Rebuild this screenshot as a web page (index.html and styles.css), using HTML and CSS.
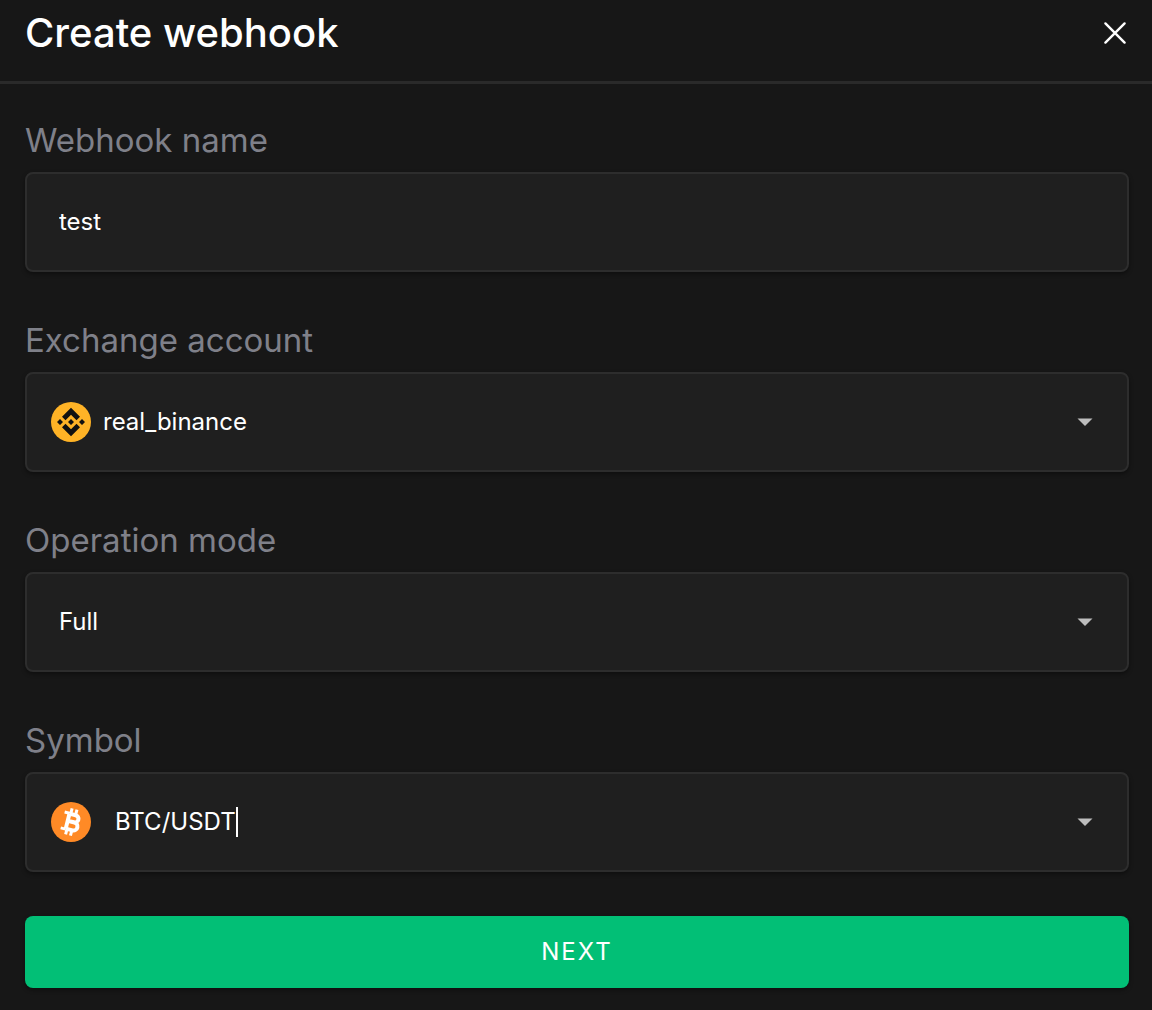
FILE: index.html
```html
<!DOCTYPE html>
<html lang="en">
<head>
<meta charset="utf-8">
<meta name="viewport" content="width=device-width, initial-scale=1">
<title>Create webhook</title>
<link rel="stylesheet" href="styles.css">
</head>
<body>
<header class="header">
  <h1 class="title">Create webhook</h1>
  <button class="close" type="button" aria-label="Close">
    <svg width="24" height="24" viewBox="0 0 24 24" fill="none" stroke="currentColor" stroke-width="2.4" stroke-linecap="round" aria-hidden="true"><path d="M2.4 2.4l19.2 19.2M21.6 2.4L2.4 21.6"/></svg>
  </button>
</header>
<form class="form">
  <div class="fields">
    <div class="field">
      <label class="label" for="name">Webhook name</label>
      <div class="control control-plain">
        <input class="value grow" id="name" type="text" value="test">
      </div>
    </div>
    <div class="field">
      <label class="label" for="account">Exchange account</label>
      <div class="control">
        <svg class="coin" viewBox="0 0 40 40" aria-hidden="true">
          <circle cx="20" cy="20" r="20" fill="#ffb326"/>
          <g fill="#111">
            <path d="M20 5.800l9 9-3.500 3.500-5.500-5.500-5.500 5.500-3.500-3.500z"/>
            <path d="M20 34.200l9-9-3.500-3.500-5.500 5.500-5.500-5.500-3.500 3.500z"/>
            <path d="M9 17l3 3-3 3-3-3zM31 17l3 3-3 3-3-3zM20 17l3 3-3 3-3-3z"/>
          </g>
        </svg>
        <select class="value grow" id="account"><option>real_binance</option></select>
        <svg class="arrow" viewBox="0 0 24 24" aria-hidden="true"><path d="M7 9.700l5 5 5-5z"/></svg>
      </div>
    </div>
    <div class="field">
      <label class="label" for="mode">Operation mode</label>
      <div class="control control-plain">
        <select class="value grow" id="mode"><option>Full</option></select>
        <svg class="arrow" viewBox="0 0 24 24" aria-hidden="true"><path d="M7 9.700l5 5 5-5z"/></svg>
      </div>
    </div>
    <div class="field">
      <label class="label" for="symbol">Symbol</label>
      <div class="control control-search">
        <svg class="coin" viewBox="0 0 40 40" aria-hidden="true">
          <circle cx="20" cy="20" r="20" fill="#ff8a26"/>
          <g transform="rotate(14 20 20)" fill="none" stroke="#fff">
            <path stroke-width="4" d="M16.500 12.300h6.400a3.600 3.600 0 0 1 0 7.300h-6M16.500 19.700h7a3.950 3.950 0 0 1 0 8h-7M16.500 12.300v15.400"/>
            <path stroke-width="3" d="M11.400 11.800h5M11.400 28.200h5M17.800 6.600v5M22.800 6.600v5M17.800 28.400v5M22.800 28.400v5"/>
          </g>
        </svg>
        <div class="search grow">
          <input class="value fit" id="symbol" type="text" value="BTC/USDT">
          <span class="caret"></span>
        </div>
        <svg class="arrow" viewBox="0 0 24 24" aria-hidden="true"><path d="M7 9.700l5 5 5-5z"/></svg>
      </div>
    </div>
  </div>
  <button class="next" type="submit">NEXT</button>
</form>
</body>
</html>
```
FILE: styles.css
```css
* {
  box-sizing: border-box;
}

body {
  margin: 0;
  background: #171717;
  color: #fff;
  font-family: Inter, "Liberation Sans", sans-serif;
}

.header {
  display: flex;
  align-items: center;
  justify-content: space-between;
  padding: 9px 25px 24px;
  border-bottom: 3px solid #2a2a2a;
}

.title {
  margin: 0;
  font-size: 40px;
  font-weight: 500;
  line-height: 48px;
}

.close {
  display: flex;
  padding: 0;
  border: 0;
  background: none;
  color: #fff;
}

.form {
  display: flex;
  flex-direction: column;
  gap: 44px;
  padding: 36px 23px 22px 25px;
}

.fields {
  display: flex;
  flex-direction: column;
  gap: 48px;
}

.field {
  display: flex;
  flex-direction: column;
  gap: 12px;
}

.label {
  color: #7f8089;
  font-size: 33px;
  line-height: 40px;
}

.control {
  display: flex;
  align-items: center;
  gap: 12px;
  height: 100px;
  padding: 0 24px;
  border: 2px solid #2d2d2d;
  border-radius: 8px;
  background: #1f1f1f;
  box-shadow: 0 2px 4px rgba(0, 0, 0, 0.4);
}

.control-plain {
  padding-left: 32px;
}

.control-search {
  gap: 24px;
}

.coin {
  flex: none;
  width: 40px;
  height: 40px;
}

.arrow {
  flex: none;
  width: 36px;
  height: 36px;
  fill: #bdbdbd;
}

.value {
  min-width: 0;
  margin: 0;
  padding: 0;
  border: 0;
  outline: 0;
  appearance: none;
  background: transparent;
  color: #fff;
  font: inherit;
  font-size: 24px;
  line-height: 32px;
}

.grow {
  flex: 1;
}

.fit {
  field-sizing: content;
}

.search {
  display: flex;
  align-items: center;
}

.caret {
  width: 2px;
  height: 30px;
  background: #fff;
}

.next {
  height: 72px;
  padding: 0 0 2px;
  border: 0;
  border-radius: 8px;
  background: #02bf76;
  box-shadow: 0 2px 4px rgba(0, 0, 0, 0.4);
  color: #fff;
  font: inherit;
  font-size: 24px;
  letter-spacing: 2px;
}
```
